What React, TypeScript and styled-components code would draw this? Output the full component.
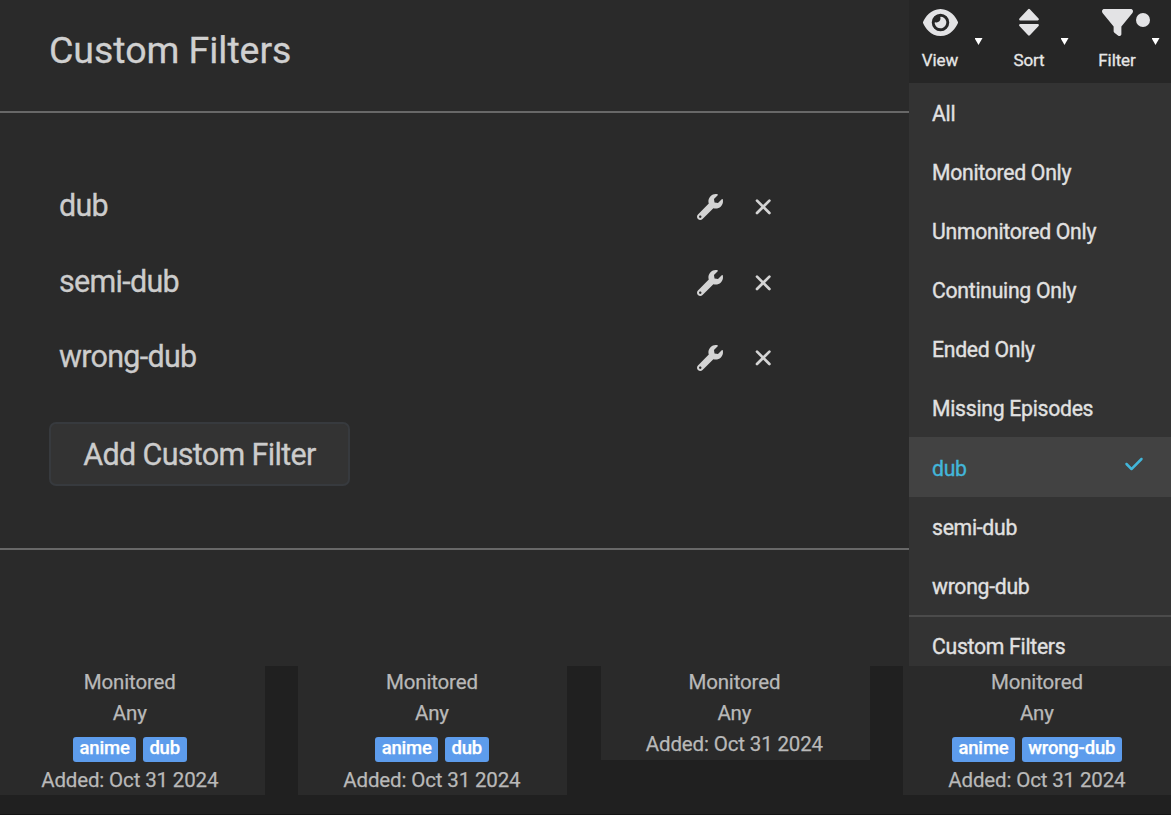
import React from 'react';
import styled, { createGlobalStyle } from 'styled-components';
import { FaWrench } from 'react-icons/fa';
import { FaCheck, FaEye, FaFilter } from 'react-icons/fa6';

const GlobalStyle = createGlobalStyle`
  *, *::before, *::after { box-sizing: border-box; }
  body {
    margin: 0;
    background: #202020;
    font-family: Roboto, 'Liberation Sans', sans-serif;
    color: #ccc;
  }
  svg { display: block; }
`;

const Page = styled.div`
  width: 1171px;
  height: 815px;
  overflow: hidden;
  background: #202020;
  border-bottom: 1px solid #141414;
`;

const Upper = styled.div`
  display: flex;
  height: 666px;
  overflow: hidden;
`;

const Modal = styled.section`
  width: 909px;
  background: #2a2a2a;
`;

const ModalHeader = styled.header`
  height: 113px;
  padding: 27px 0 0 49px;
  border-bottom: 2px solid #686868;
`;

const Title = styled.h1`
  margin: 0;
  font-size: 37.5px;
  line-height: 46px;
  font-weight: 400;
  letter-spacing: -0.05px;
  color: #d0d0d0;
  -webkit-text-stroke: 0.3px currentColor;
`;

const ModalBody = styled.div`
  height: 437px;
  padding: 55.2px 0 0 49px;
  border-bottom: 2px solid #686868;
`;

const FilterRow = styled.div`
  display: flex;
  align-items: center;
  height: 75.67px;
  padding-left: 10px;
`;

const FilterName = styled.div`
  width: 638px;
  font-size: 30.5px;
  line-height: 36px;
  letter-spacing: -0.72px;
  color: #ccc;
  -webkit-text-stroke: 0.3px currentColor;
`;

const RowButton = styled.button<{ $width: number }>`
  display: flex;
  width: ${(p) => p.$width}px;
  padding: 2px 0 0;
  border: 0;
  background: none;
  color: #d4d4d4;
`;

const AddButton = styled.button`
  display: block;
  width: 301px;
  height: 64px;
  margin-top: 26.8px;
  padding: 2px 0 0;
  border: 2px solid #373a3e;
  border-radius: 7px;
  background: #333;
  font: 400 30.5px/58px Roboto, 'Liberation Sans', sans-serif;
  letter-spacing: -0.68px;
  color: #ccc;
  -webkit-text-stroke: 0.3px currentColor;
`;

const Side = styled.aside`
  width: 262px;
  background: #333;
`;

const Toolbar = styled.div`
  display: flex;
  height: 83px;
  background: #262626;
`;

const ToolButton = styled.div<{ $width: number; $pad: number }>`
  display: flex;
  width: ${(p) => p.$width}px;
  padding: 4px 0 0 ${(p) => p.$pad}px;
  color: #e3e3e5;
`;

const ToolMain = styled.div<{ $width: number }>`
  display: flex;
  flex-direction: column;
  align-items: center;
  width: ${(p) => p.$width}px;
  position: relative;
`;

const ToolIcon = styled.div`
  display: flex;
  align-items: center;
  height: 36px;
`;

const ToolLabel = styled.div`
  margin-top: 9px;
  font-size: 17px;
  line-height: 22px;
  letter-spacing: -0.1px;
  white-space: nowrap;
  color: #e6e6e6;
  -webkit-text-stroke: 0.3px currentColor;
`;

const Dot = styled.span`
  position: absolute;
  top: 9px;
  left: 36.5px;
  width: 14px;
  height: 14px;
  border-radius: 50%;
  background: #e3e3e5;
`;

const Caret = styled.div<{ $gap: number }>`
  margin: 34px 0 0 ${(p) => p.$gap}px;
  width: 8px;
  height: 7px;
  background: #fff;
  clip-path: polygon(0 0, 100% 0, 50% 100%);
`;

const MenuItem = styled.div<{ $selected?: boolean }>`
  display: flex;
  align-items: center;
  justify-content: space-between;
  height: ${(p) => (p.$selected ? 60 : 59)}px;
  padding: 3px 27px 0 23px;
  background: ${(p) => (p.$selected ? '#424242' : 'transparent')};
  color: ${(p) => (p.$selected ? '#42b6da' : '#e1e1e1')};
  font-size: 21.2px;
  line-height: 26px;
  letter-spacing: -0.28px;
  -webkit-text-stroke: 0.35px currentColor;

  svg { margin-top: -10px; }
`;

const MenuFooter = styled(MenuItem)`
  padding-top: 1px;
  border-top: 2px solid #4b4b4b;
  height: 61px;
`;

const Cards = styled.div`
  display: flex;
  align-items: flex-start;
  width: 1206px;
  gap: 33.3px;
`;

const Card = styled.article<{ $first?: boolean }>`
  display: flex;
  flex-direction: column;
  align-items: center;
  flex-shrink: 0;
  width: ${(p) => (p.$first ? 265 : 269.2)}px;
  padding: ${(p) => (p.$first ? '1px 5.5px 0 0' : '1px 2px 0 0')};
  background: #2a2a2a;
  font-size: 20.5px;
  line-height: 31px;
  letter-spacing: -0.15px;
  color: #b9b9b9;
  -webkit-text-stroke: 0.25px currentColor;
`;

const Added = styled.div<{ $tagged: boolean }>`
  padding-top: ${(p) => (p.$tagged ? 1 : 0)}px;
  line-height: ${(p) => (p.$tagged ? 30 : 31)}px;
`;

const Tags = styled.div`
  display: flex;
  gap: 6.6px;
  height: 35px;
  padding-top: 8px;
`;

const Tag = styled.span`
  height: 24.5px;
  padding: 0 6.6px;
  border-radius: 3px;
  background: #5d9cec;
  color: #fff;
  font-size: 18.5px;
  font-weight: 500;
  line-height: 22px;
  letter-spacing: -0.2px;
`;

const filters = ['dub', 'semi-dub', 'wrong-dub'];
const options = [
  'All',
  'Monitored Only',
  'Unmonitored Only',
  'Continuing Only',
  'Ended Only',
  'Missing Episodes',
  'dub',
  'semi-dub',
  'wrong-dub',
];
const series = [['anime', 'dub'], ['anime', 'dub'], [], ['anime', 'wrong-dub']];

const CrossIcon = () => (
  <svg width="24" height="24" viewBox="0 0 24 24" fill="none" stroke="currentColor" strokeWidth="2.7" strokeLinecap="round">
    <path d="M6 5.6 18.4 18M18.4 5.6 6 18" />
  </svg>
);

const SortIcon = () => (
  <svg width="22" height="30" viewBox="0 0 22 30" fill="currentColor" stroke="currentColor" strokeWidth="2.4" strokeLinejoin="round">
    <path d="M11 3 19.7 12.2H2.3ZM11 27.4 19.7 18.2H2.3Z" />
  </svg>
);

export default function App() {
  return (
    <Page>
      <GlobalStyle />
      <Upper>
        <Modal>
          <ModalHeader>
            <Title>Custom Filters</Title>
          </ModalHeader>
          <ModalBody>
            {filters.map((name) => (
              <FilterRow key={name}>
                <FilterName>{name}</FilterName>
                <RowButton $width={54} aria-label="Edit">
                  <FaWrench size={26} />
                </RowButton>
                <RowButton $width={26} aria-label="Delete">
                  <CrossIcon />
                </RowButton>
              </FilterRow>
            ))}
            <AddButton>Add Custom Filter</AddButton>
          </ModalBody>
        </Modal>
        <Side>
          <Toolbar>
            <ToolButton $width={90} $pad={13}>
              <ToolMain $width={36}>
                <ToolIcon><FaEye size={35} /></ToolIcon>
                <ToolLabel>View</ToolLabel>
              </ToolMain>
              <Caret $gap={16.5} />
            </ToolButton>
            <ToolButton $width={86} $pad={14}>
              <ToolMain $width={32}>
                <ToolIcon><SortIcon /></ToolIcon>
                <ToolLabel>Sort</ToolLabel>
              </ToolMain>
              <Caret $gap={15.5} />
            </ToolButton>
            <ToolButton $width={86} $pad={14}>
              <ToolMain $width={36}>
                <ToolIcon><FaFilter size={31} /></ToolIcon>
                <ToolLabel>Filter</ToolLabel>
                <Dot />
              </ToolMain>
              <Caret $gap={16.5} />
            </ToolButton>
          </Toolbar>
          {options.map((name) => (
            <MenuItem key={name} $selected={name === 'dub'}>
              {name}
              {name === 'dub' && <FaCheck size={20} />}
            </MenuItem>
          ))}
          <MenuFooter>Custom Filters</MenuFooter>
        </Side>
      </Upper>
      <Cards>
        {series.map((tags, i) => (
          <Card key={i} $first={i === 0}>
            <div>Monitored</div>
            <div>Any</div>
            {tags.length > 0 && (
              <Tags>
                {tags.map((tag) => (
                  <Tag key={tag}>{tag}</Tag>
                ))}
              </Tags>
            )}
            <Added $tagged={tags.length > 0}>Added: Oct 31 2024</Added>
          </Card>
        ))}
      </Cards>
    </Page>
  );
}
